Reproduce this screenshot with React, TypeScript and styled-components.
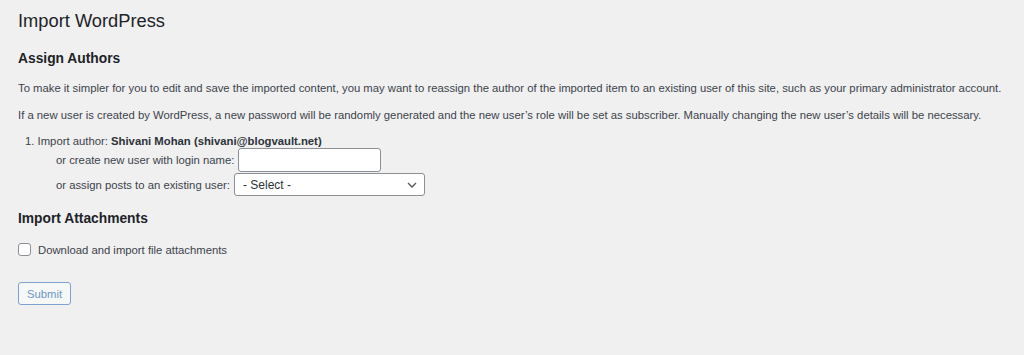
import styled, { createGlobalStyle } from 'styled-components'

const GlobalStyle = createGlobalStyle`
  html, body {
    margin: 0;
    padding: 0;
    background: #f0f0f1;
  }
  body {
    font-family: "Liberation Sans", Arial, sans-serif;
    color: #3c434a;
    font-size: 11.3px;
  }
`

export default function App() {
  return (
    <>
      <GlobalStyle />
      <Wrap>
        <Title>Import WordPress</Title>
        <Heading>Assign Authors</Heading>
        <Text>
          To make it simpler for you to edit and save the imported content, you may want to reassign
          the author of the imported item to an existing user of this site, such as your primary
          administrator account.
        </Text>
        <Text>
          If a new user is created by WordPress, a new password will be randomly generated and the new
          user’s role will be set as subscriber. Manually changing the new user’s details will be
          necessary.
        </Text>
        <AuthorList>
          <li>
            Import author: <strong>Shivani Mohan (shivani@blogvault.net)</strong>
            <FieldRow>
              or create new user with login name: <TextInput type="text" />
            </FieldRow>
            <FieldRow>
              or assign posts to an existing user:{' '}
              <SelectBox>
                <span>- Select -</span>
                <svg width="10" height="6" viewBox="0 0 10 6">
                  <path d="M1 1l4 4 4-4" fill="none" stroke="#50575e" strokeWidth="1.3" />
                </svg>
              </SelectBox>
            </FieldRow>
          </li>
        </AuthorList>
        <Heading $top={14}>Import Attachments</Heading>
        <CheckRow>
          <CheckBox type="checkbox" />
          Download and import file attachments
        </CheckRow>
        <SubmitButton>Submit</SubmitButton>
      </Wrap>
    </>
  )
}

const Wrap = styled.div`
  padding: 10px 18px 0;
`

const Title = styled.h1`
  margin: 0;
  font-size: 18.3px;
  font-weight: 400;
  line-height: 22px;
  color: #1d2327;
`

const Heading = styled.h2<{ $top?: number }>`
  margin: ${({ $top }) => $top ?? 18}px 0 0;
  font-size: 13.8px;
  font-weight: 600;
  line-height: 18px;
  color: #1d2327;
`

const Text = styled.p`
  margin: 13px 0 0;
  line-height: 14px;
`

const AuthorList = styled.ol`
  margin: 12px 0 0;
  padding-left: 7px;
  list-style-position: inside;
  line-height: 14px;
  strong {
    font-weight: 600;
    color: #2c3338;
  }
`

const FieldRow = styled.div`
  display: flex;
  align-items: center;
  gap: 4px;
  padding-left: 31px;
  margin-top: 0;
  & + & {
    margin-top: 1px;
  }
`

const TextInput = styled.input`
  box-sizing: border-box;
  width: 143px;
  height: 24px;
  margin: 0;
  border: 1px solid #8c8f94;
  border-radius: 3px;
  background: #fff;
`

const SelectBox = styled.div`
  box-sizing: border-box;
  display: flex;
  align-items: center;
  justify-content: space-between;
  width: 191px;
  height: 23px;
  padding: 0 7px 0 8px;
  border: 1px solid #8c8f94;
  border-radius: 3px;
  background: #fff;
  font-size: 12px;
  color: #2c3338;
`

const CheckRow = styled.label`
  display: flex;
  align-items: center;
  gap: 7px;
  margin-top: 15px;
`

const CheckBox = styled.input`
  appearance: none;
  box-sizing: border-box;
  width: 13px;
  height: 13px;
  margin: 0;
  border: 1px solid #8c8f94;
  border-radius: 3px;
  background: #fff;
`

const SubmitButton = styled.button`
  display: block;
  box-sizing: border-box;
  width: 53px;
  height: 23px;
  margin-top: 26px;
  padding: 0;
  border: 1px solid #7ea2cf;
  border-radius: 3px;
  background: #f6f7f7;
  color: #6d97c7;
  font-family: "Liberation Sans", Arial, sans-serif;
  font-size: 11.3px;
`
